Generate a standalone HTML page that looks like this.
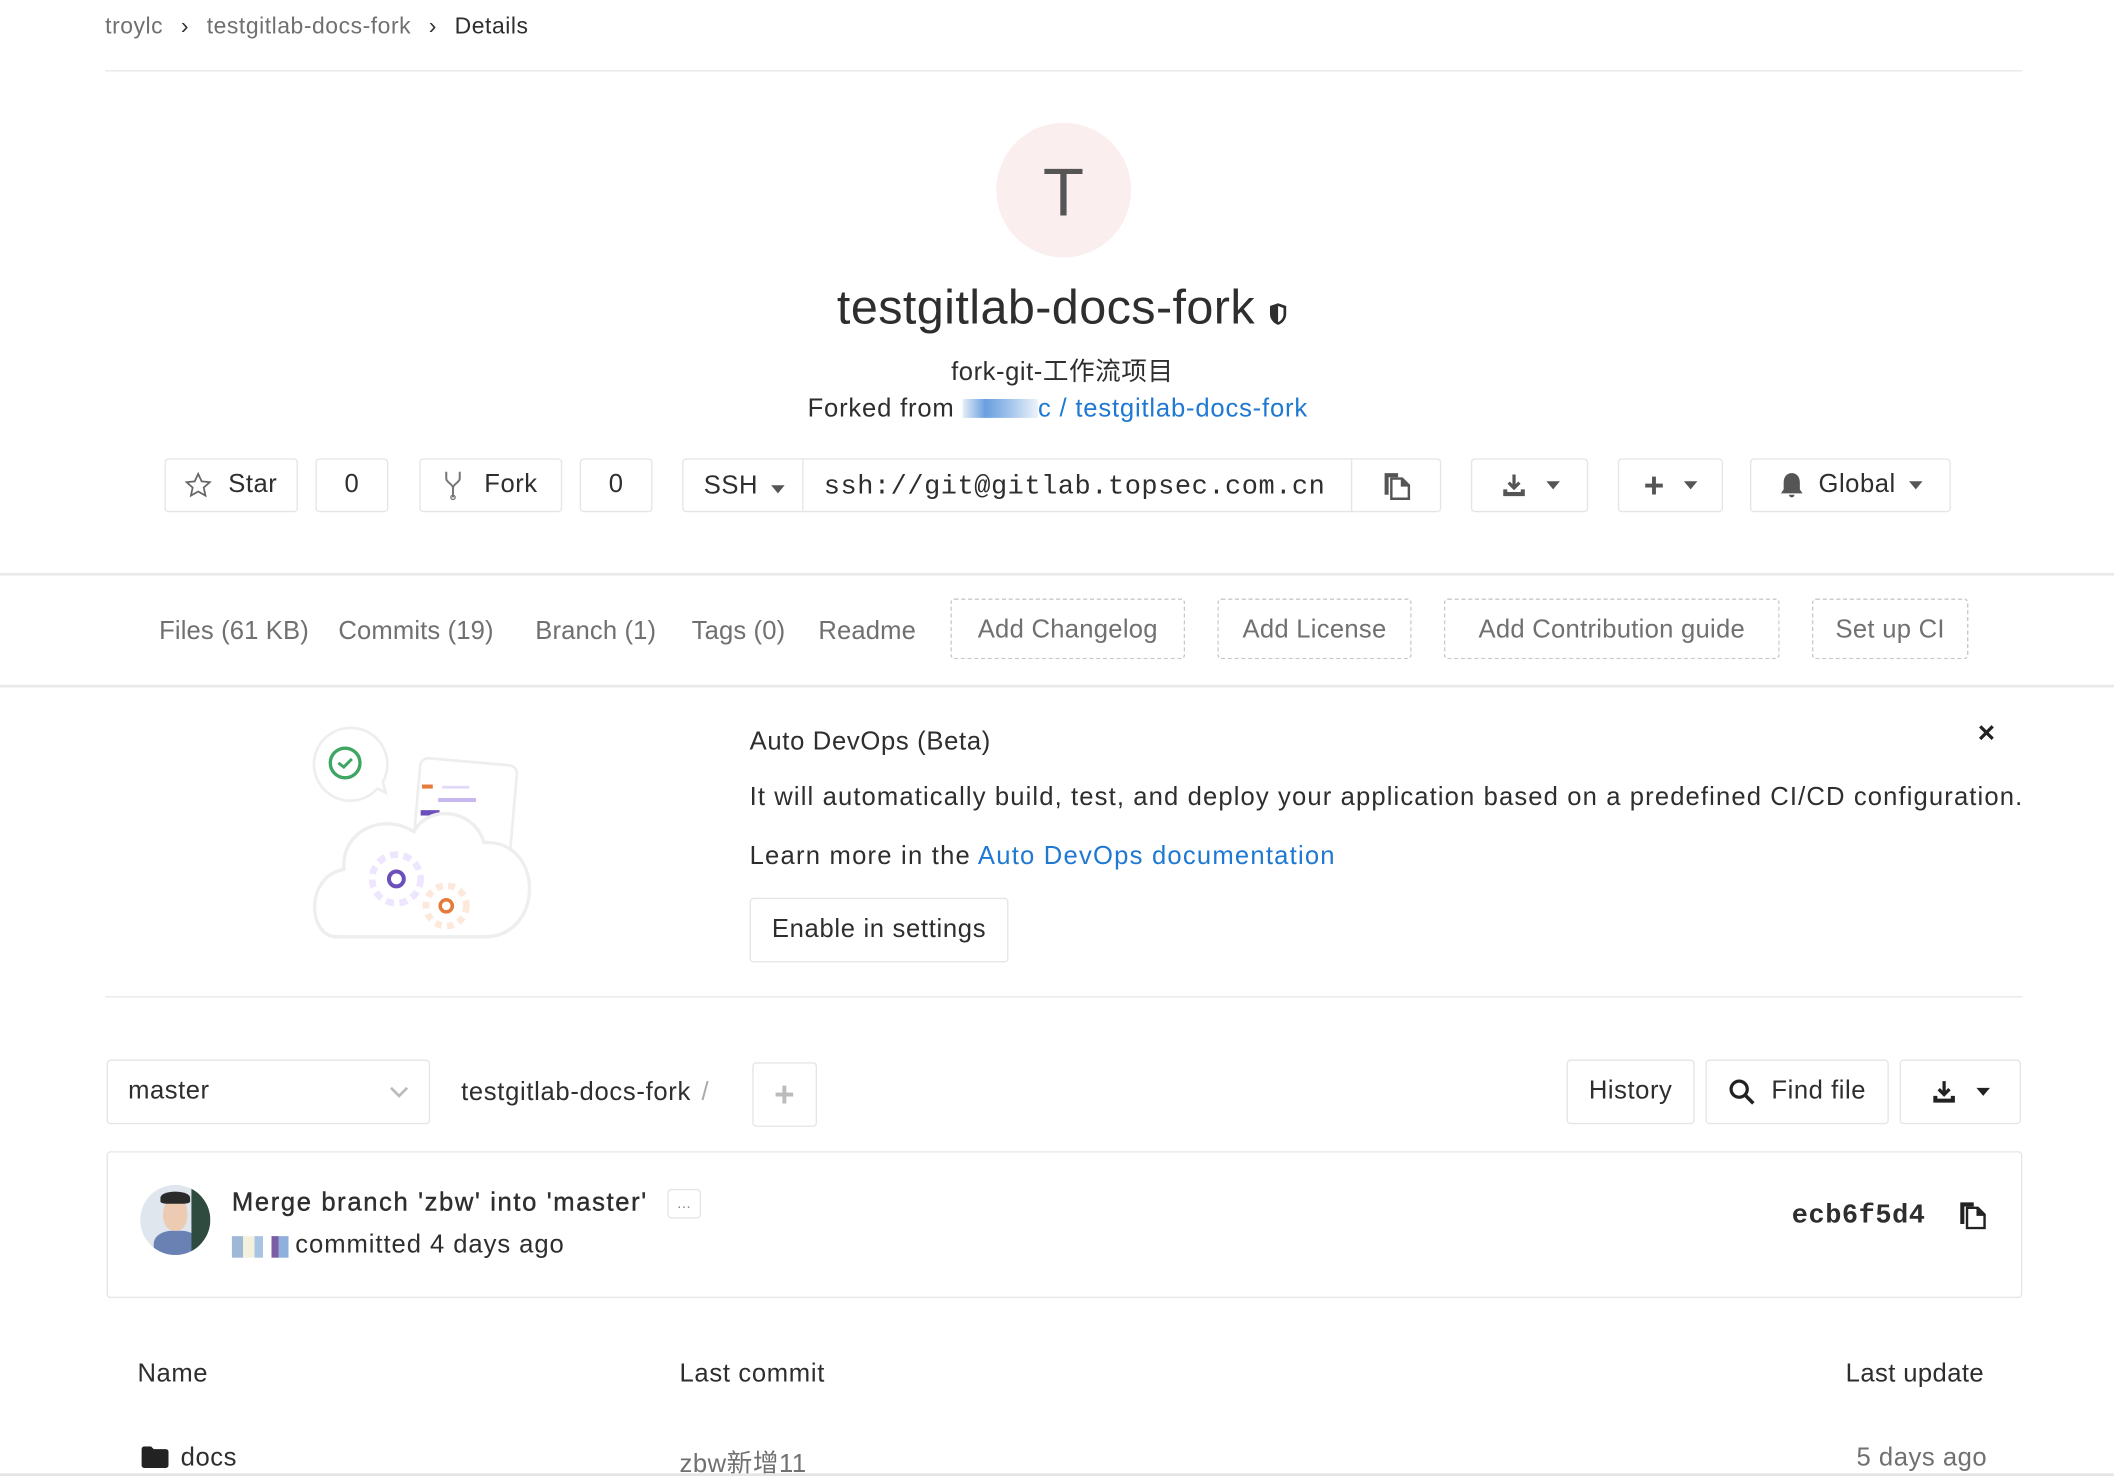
<!DOCTYPE html>
<html><head><meta charset="utf-8"><style>
html,body{margin:0;padding:0;background:#fff;overflow:hidden}
body{width:2114px;height:1476px}
#w{position:absolute;left:0;top:0;width:1568px;height:1095px;transform:scale(1.3482,1.348);transform-origin:0 0;font-family:"Liberation Sans","Noto Sans CJK SC",sans-serif;color:#2e2e2e;letter-spacing:0.4px}
.a{position:absolute;white-space:nowrap}
.hr{position:absolute;height:1px;background:#e8e8e8}
.btn{position:absolute;border:1px solid #e5e5e5;border-radius:3px;box-sizing:border-box;background:#fff;display:flex;align-items:center;justify-content:center;font-size:19px;color:#2e2e2e}
.dash{position:absolute;border:1px dashed #c8c8c8;border-radius:3px;box-sizing:border-box;display:flex;align-items:center;justify-content:center;font-size:19px;color:#707070}
.tab{position:absolute;top:458px;font-size:19px;color:#707070;letter-spacing:0.1px}
.car{display:inline-block;width:0;height:0;border-left:5px solid transparent;border-right:5px solid transparent;border-top:6px solid #555;margin-left:10px}
a{color:#1f78d1;text-decoration:none}
</style></head><body><div id="w">

<div class="a" style="left:78px;top:10px;font-size:17px;color:#707070;letter-spacing:0.4px">troylc <span style="color:#333;margin:0 8px">›</span> testgitlab-docs-fork <span style="color:#333;margin:0 8px">›</span> <span style="color:#2e2e2e">Details</span></div>
<div class="hr" style="left:78px;top:52px;width:1422px"></div>

<div class="a" style="left:739px;top:91px;width:100px;height:100px;border-radius:50%;background:#fbeeee;text-align:center;line-height:104px;font-size:50px;color:#555">T</div>
<div class="a" style="left:0;width:1576px;top:207px;text-align:center;font-size:36px;color:#2e2e2e;letter-spacing:0.3px">testgitlab-docs-fork <svg width="14" height="18" viewBox="0 0 14 18" style="vertical-align:-2px"><path d="M7 1 L13 3 V9 C13 13 10 16 7 17 C4 16 1 13 1 9 V3 Z" fill="#2e2e2e"/><path d="M7 3 L11 4.5 V9 C11 12 9 14 7 15 Z" fill="#fff"/></svg></div>
<div class="a" style="left:0;width:1576px;top:261px;text-align:center;font-size:19px;color:#2e2e2e">fork-git-工作流项目</div>
<div class="a" style="left:599px;top:293px;font-size:19px;color:#2e2e2e;letter-spacing:0.6px">Forked from <span style="display:inline-block;width:56px;height:14px;background:linear-gradient(90deg,#e6eef8,#6a9fe0 30%,#9cc0ea 60%,#eef3fa);vertical-align:-1px"></span><a>c / testgitlab-docs-fork</a></div>

<div class="btn" style="left:122px;top:340px;width:99px;height:40px"><svg width="20" height="20" viewBox="0 0 20 20" style="margin-right:12px"><path d="M10 1.5l2.6 5.6 6 .6-4.5 4 1.3 6-5.4-3.1-5.4 3.1 1.3-6-4.5-4 6-.6z" fill="none" stroke="#666" stroke-width="1.3"/></svg>Star</div>
<div class="btn" style="left:234px;top:340px;width:54px;height:40px">0</div>
<div class="btn" style="left:311px;top:340px;width:106px;height:40px"><svg width="14" height="22" viewBox="0 0 14 22" style="margin-right:16px"><path d="M2 1v5c0 3 5 4 5 7v7M12 1v5c0 3-5 4-5 7" fill="none" stroke="#777" stroke-width="1.5"/><circle cx="7" cy="20" r="1.6" fill="none" stroke="#777"/></svg>Fork</div>
<div class="btn" style="left:430px;top:340px;width:54px;height:40px">0</div>
<div class="btn" style="left:506px;top:340px;width:563px;height:40px;justify-content:flex-start"></div>
<div class="a" style="left:522px;top:350px;font-size:19px">SSH<span class="car"></span></div>
<div class="a" style="left:595px;top:340px;width:1px;height:40px;background:#e5e5e5"></div>
<div class="a" style="left:611px;top:350px;font-size:20px;font-family:'Liberation Mono',monospace;letter-spacing:0.4px">ssh://git@gitlab.topsec.com.cn</div>
<div class="a" style="left:1002px;top:340px;width:1px;height:40px;background:#e5e5e5"></div>
<svg class="a" style="left:1025px;top:349px" width="22" height="22" viewBox="0 0 22 22"><path d="M2 2h10v3H5v13H2z" fill="#555"/><path d="M7 6h8l5 5v10H7z" fill="#fff" stroke="#555" stroke-width="1.8"/><path d="M14 6v6h6" fill="#555"/></svg>
<div class="btn" style="left:1091px;top:340px;width:87px;height:40px"><svg width="20" height="20" viewBox="0 0 20 20"><path d="M10 2v10M6 8l4 4 4-4" stroke="#555" stroke-width="2.4" fill="none"/><path d="M2 13v5h16v-5h-3v2H5v-2z" fill="#555"/></svg><span class="car" style="margin-left:14px"></span></div>
<div class="btn" style="left:1200px;top:340px;width:78px;height:40px"><span style="font-size:26px;font-weight:bold;color:#555">+</span><span class="car" style="margin-left:14px"></span></div>
<div class="btn" style="left:1298px;top:340px;width:149px;height:40px"><svg width="20" height="22" viewBox="0 0 20 22" style="margin-right:10px"><path d="M10 2c-4 0-6 3-6 7v5l-2 3h16l-2-3V9c0-4-2-7-6-7z M8 18h4a2 2 0 0 1-4 0z" fill="#555"/></svg>Global<span class="car"></span></div>

<div class="hr" style="left:0;top:425px;width:1568px;background:#eaeaea;height:2px"></div>
<div class="tab" style="left:118px">Files (61 KB)</div>
<div class="tab" style="left:251px">Commits (19)</div>
<div class="tab" style="left:397px">Branch (1)</div>
<div class="tab" style="left:513px">Tags (0)</div>
<div class="tab" style="left:607px">Readme</div>
<div class="dash" style="left:705px;top:444px;width:174px;height:45px;letter-spacing:0.2px;padding-top:3px">Add Changelog</div>
<div class="dash" style="left:903px;top:444px;width:144px;height:45px;letter-spacing:0.2px;padding-top:3px">Add License</div>
<div class="dash" style="left:1071px;top:444px;width:249px;height:45px;letter-spacing:0.2px;padding-top:3px">Add Contribution guide</div>
<div class="dash" style="left:1344px;top:444px;width:116px;height:45px;letter-spacing:0.2px;padding-top:3px">Set up CI</div>
<div class="hr" style="left:0;top:508px;width:1568px;background:#eaeaea;height:2px"></div>

<svg class="a" style="left:225px;top:535px" width="172" height="170" viewBox="0 0 172 170">
<path d="M35 5a27 27 0 1 0 20 45l6 3-2-8A27 27 0 0 0 35 5z" fill="#fff" stroke="#eee" stroke-width="2"/>
<circle cx="31" cy="31" r="11" fill="none" stroke="#3fa563" stroke-width="2.5"/><path d="M26 31l4 3 6-6" fill="none" stroke="#3fa563" stroke-width="2.2"/>
<rect x="84" y="30" width="72" height="70" rx="6" fill="#fff" stroke="#eee" stroke-width="2" transform="rotate(5 120 65)"/>
<rect x="88" y="47" width="8" height="3" fill="#e67a3a"/><rect x="103" y="48" width="20" height="2" fill="#e0d9f7"/>
<rect x="100" y="57" width="28" height="3" fill="#c7b8f0"/><rect x="87" y="66" width="14" height="4" fill="#6b4fbb"/>
<path d="M25 160c-22 0-24-45 5-50-2-30 30-42 52-28 10-20 44-18 52 8 45-2 45 70 0 70z" fill="#fff" stroke="#eee" stroke-width="2.5"/>
<circle cx="69" cy="117" r="18" fill="none" stroke="#eee6ff" stroke-width="5" stroke-dasharray="6 4"/>
<circle cx="69" cy="117" r="5.5" fill="none" stroke="#6b4fbb" stroke-width="3"/>
<circle cx="106" cy="137" r="15" fill="none" stroke="#fde9dc" stroke-width="5" stroke-dasharray="5 4"/>
<circle cx="106" cy="137" r="4.5" fill="none" stroke="#e67a3a" stroke-width="2.6"/>
</svg>
<div class="a" style="left:556px;top:540px;font-size:19px;color:#2e2e2e;letter-spacing:0.5px">Auto DevOps (Beta)</div>
<div class="a" style="left:1467px;top:531px;font-size:22px;font-weight:bold;color:#222">×</div>
<div class="a" style="left:556px;top:581px;font-size:19px;color:#2e2e2e;letter-spacing:0.83px">It will automatically build, test, and deploy your application based on a predefined CI/CD configuration.</div>
<div class="a" style="left:556px;top:625px;font-size:19px;color:#2e2e2e;letter-spacing:0.9px">Learn more in the <a>Auto DevOps documentation</a></div>
<div class="btn" style="left:556px;top:666px;width:192px;height:48px;letter-spacing:0.5px">Enable in settings</div>
<div class="hr" style="left:78px;top:739px;width:1422px"></div>

<div class="btn" style="left:79px;top:786px;width:240px;height:48px;justify-content:space-between;padding:0 14px 0 15px"><span>master</span><svg width="16" height="10" viewBox="0 0 16 10"><path d="M2 2l6 6 6-6" fill="none" stroke="#bbb" stroke-width="2"/></svg></div>
<div class="a" style="left:342px;top:800px;font-size:19px;letter-spacing:0.5px">testgitlab-docs-fork <span style="color:#aaa;margin-left:2px">/</span></div>
<div class="btn" style="left:558px;top:788px;width:48px;height:48px"><span style="font-size:26px;color:#bbb;font-weight:bold">+</span></div>
<div class="btn" style="left:1162px;top:786px;width:95px;height:48px">History</div>
<div class="btn" style="left:1265px;top:786px;width:136px;height:48px"><svg width="20" height="20" viewBox="0 0 20 20" style="margin-right:12px"><circle cx="8" cy="8" r="6" fill="none" stroke="#222" stroke-width="2.4"/><path d="M12.5 12.5l6 6" stroke="#222" stroke-width="2.6"/></svg>Find file</div>
<div class="btn" style="left:1409px;top:786px;width:90px;height:48px"><svg width="20" height="20" viewBox="0 0 20 20"><path d="M10 2v10M6 8l4 4 4-4" stroke="#222" stroke-width="2.4" fill="none"/><path d="M2 13v5h16v-5h-3v2H5v-2z" fill="#222"/></svg><span class="car" style="margin-left:14px;border-top-color:#222"></span></div>

<div class="btn" style="left:79px;top:854px;width:1421px;height:109px"></div>
<div class="a" style="left:104px;top:879px;width:52px;height:52px;border-radius:50%;overflow:hidden;background:#dfe6ee">
<div style="position:absolute;left:10px;top:34px;width:34px;height:24px;border-radius:40% 40% 0 0;background:#6a82b3"></div>
<div style="position:absolute;left:17px;top:10px;width:18px;height:24px;border-radius:45%;background:#eccbb2"></div>
<div style="position:absolute;left:15px;top:5px;width:22px;height:9px;border-radius:50% 50% 20% 20%;background:#2a2a2a"></div>
<div style="position:absolute;left:38px;top:0;width:14px;height:52px;background:#2f4a3e"></div></div>
<div class="a" style="left:172px;top:882px;font-size:19px;color:#2e2e2e;letter-spacing:1.2px;-webkit-text-stroke:0.3px #2e2e2e">Merge branch 'zbw' into 'master'</div>
<div class="btn" style="left:495px;top:882px;width:25px;height:22px;font-size:11px;color:#888">...</div>
<div class="a" style="left:172px;top:917px;width:42px;height:16px;background:linear-gradient(90deg,#9fb8d8 0 20%,#f3f0dd 20% 40%,#a8c4e4 40% 55%,#fff 55% 70%,#7b5ea6 70% 82%,#8fb0dc 82%)"></div>
<div class="a" style="left:219px;top:913px;font-size:19px;color:#2e2e2e;letter-spacing:0.7px">committed 4 days ago</div>
<div class="a" style="left:1329px;top:891px;font-size:20px;font-weight:bold;font-family:'Liberation Mono',monospace;color:#2e2e2e">ecb6f5d4</div>
<svg class="a" style="left:1452px;top:890px" width="22" height="22" viewBox="0 0 22 22"><path d="M2 2h10v3H5v13H2z" fill="#222"/><path d="M7 6h8l5 5v10H7z" fill="#fff" stroke="#222" stroke-width="1.8"/><path d="M14 6v6h6" fill="#222"/></svg>

<div class="a" style="left:102px;top:1009px;font-size:19px">Name</div>
<div class="a" style="left:504px;top:1009px;font-size:19px;letter-spacing:0.5px">Last commit</div>
<div class="a" style="left:1369px;top:1009px;font-size:19px;letter-spacing:0.3px">Last update</div>
<svg class="a" style="left:105px;top:1073px" width="20" height="16" viewBox="0 0 20 16"><path d="M0 2a2 2 0 0 1 2-2h5l2 2h9a2 2 0 0 1 2 2v10a2 2 0 0 1-2 2H2a2 2 0 0 1-2-2z" fill="#222"/></svg>
<div class="a" style="left:134px;top:1071px;font-size:19px">docs</div>
<div class="a" style="left:504px;top:1071px;font-size:19px;color:#707070">zbw新增11</div>
<div class="a" style="left:1377px;top:1071px;font-size:19px;color:#707070">5 days ago</div>
<div class="hr" style="left:0;top:1093px;width:1568px;height:2px;background:#e5e5e5"></div>
</div></body></html>
